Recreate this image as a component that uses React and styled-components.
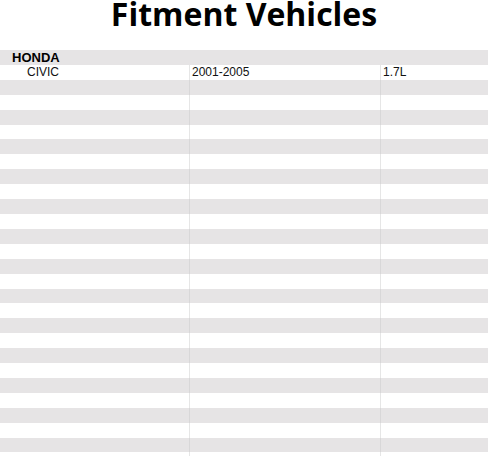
import React from 'react'
import styled, { createGlobalStyle } from 'styled-components'

const GlobalStyle = createGlobalStyle`
  html, body {
    margin: 0;
    padding: 0;
    background: #ffffff;
  }
`

const vehicles = [
  { make: 'HONDA', models: [{ model: 'CIVIC', years: '2001-2005', engine: '1.7L' }] },
]

const TOTAL_ROWS = 28

function App() {
  const rows = []
  vehicles.forEach((v) => {
    rows.push({ type: 'make', label: v.make })
    v.models.forEach((m) => rows.push({ type: 'model', ...m }))
  })
  while (rows.length < TOTAL_ROWS) rows.push({ type: 'empty' })

  return (
    <Page>
      <GlobalStyle />
      <Header>
        <Title>Fitment Vehicles</Title>
      </Header>
      <Table>
        {rows.map((row, index) =>
          row.type === 'make' ? (
            <Row key={index} $shaded={index % 2 === 0}>
              <MakeCell>{row.label}</MakeCell>
            </Row>
          ) : (
            <Row key={index} $shaded={index % 2 === 0}>
              <Cell $indent>{row.model}</Cell>
              <Cell $divider>{row.years}</Cell>
              <Cell $divider>{row.engine}</Cell>
            </Row>
          )
        )}
      </Table>
    </Page>
  )
}

const Page = styled.div`
  width: 488px;
  height: 456px;
  overflow: hidden;
`

const Header = styled.div`
  height: 50px;
  display: flex;
  justify-content: center;
  align-items: flex-start;
`

const Title = styled.h1`
  margin: 0;
  font-family: 'Open Sans', 'Noto Sans', sans-serif;
  font-weight: 700;
  font-size: 32px;
  line-height: 28px;
  color: #000;
  white-space: nowrap;
`

const Table = styled.div`
  display: flex;
  flex-direction: column;
`

const Row = styled.div`
  display: grid;
  grid-template-columns: 189px 191px 1fr;
  height: 14.92px;
  background: ${(p) => (p.$shaded ? '#e6e4e5' : '#ffffff')};
`

const Cell = styled.div`
  font-family: 'Liberation Sans', Arial, sans-serif;
  font-size: 12px;
  line-height: 15px;
  color: #111;
  padding-left: ${(p) => (p.$indent ? '27px' : '2px')};
  border-left: ${(p) => (p.$divider ? '1px solid rgba(200, 200, 200, 0.45)' : 'none')};
  white-space: nowrap;
`

const MakeCell = styled.div`
  grid-column: 1 / -1;
  font-family: 'Liberation Sans', Arial, sans-serif;
  font-weight: 700;
  font-size: 13px;
  line-height: 15px;
  color: #000;
  padding-left: 12px;
`

export default App
